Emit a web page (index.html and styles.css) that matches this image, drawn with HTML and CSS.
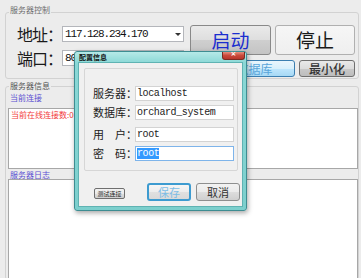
FILE: index.html
```html
<!DOCTYPE html>
<html lang="zh-CN">
<head>
    <meta charset="UTF-8">
    <title>服务器控制</title>
    <link rel="stylesheet" href="styles.css">
</head>
<body>
    <div class="window">
        <div class="group group-control">
            <div class="group-title">服务器控制</div>
            <div class="control-body">
                <div class="conn-fields">
                    <div class="field-row">
                        <span class="big-label">地址：</span>
                        <div class="combo">
                            <span class="combo-text">117.128.234.170</span>
                            <span class="combo-arrow"></span>
                        </div>
                    </div>
                    <div class="field-row">
                        <span class="big-label">端口：</span>
                        <div class="textbox port">80</div>
                    </div>
                </div>
                <div class="control-buttons">
                    <div class="btn-row btn-row-main">
                        <button class="btn btn-start">启动</button>
                        <button class="btn btn-stop">停止</button>
                    </div>
                    <div class="btn-row btn-row-small">
                        <button class="btn btn-db">配置数据库</button>
                        <button class="btn btn-min">最小化</button>
                    </div>
                </div>
            </div>
        </div>

        <div class="group group-info">
            <div class="group-title">服务器信息</div>
            <div class="sub-title conn-title">当前连接</div>
            <div class="list-box conn-box">
                <span class="online">当前在线连接数:0</span>
            </div>
            <div class="sub-title log-title">服务器日志</div>
            <div class="list-box log-box"></div>
        </div>
    </div>

    <!-- config dialog on top of the main window -->
    <div class="dialog">
        <div class="dialog-titlebar">配置信息</div>
        <span class="dialog-close"></span>
        <div class="dialog-client">
            <div class="config-panel">
                <div class="config-row">
                    <span class="config-label">服务器：</span>
                    <div class="config-input">localhost</div>
                </div>
                <div class="config-row">
                    <span class="config-label">数据库：</span>
                    <div class="config-input">orchard_system</div>
                </div>
                <div class="config-row row-user">
                    <span class="config-label">用&emsp;户：</span>
                    <div class="config-input">root</div>
                </div>
                <div class="config-row">
                    <span class="config-label">密&emsp;码：</span>
                    <div class="config-input focused"><span class="selected">root</span></div>
                </div>
            </div>
            <div class="dialog-buttons">
                <button class="btn btn-test">测试连接</button>
                <button class="btn btn-save">保存</button>
                <button class="btn btn-cancel">取消</button>
            </div>
        </div>
    </div>
</body>
</html>
```

FILE: styles.css
```css
* {
    margin: 0;
    padding: 0;
    box-sizing: border-box;
}

body {
    width: 361px;
    height: 278px;
    overflow: hidden;
    position: relative;
    background: #ececec;
    font-family: "Noto Sans CJK SC", sans-serif;
    color: #222;
}

/* ---------- main window ---------- */

.group {
    border: 1px solid #d2d2d2;
    border-radius: 3px;
}

.group-title {
    width: fit-content;
    height: 10px;
    margin-left: 3px;
    padding: 0 1px;
    background: #ececec;
    font-size: 8px;
    line-height: 10px;
    color: #6d6d6d;
}

.group-control {
    margin: 12px 2px 0 5px;
    padding: 0 3px 1px 11px;
}

.group-control .group-title {
    margin-top: -8px;
    margin-left: -8px;
}

.control-body {
    display: flex;
    margin-top: 10px;
}

.conn-fields {
    display: flex;
    flex-direction: column;
    gap: 6px;
    width: 167px;
    margin-right: 6px;
}

.field-row {
    display: flex;
    align-items: center;
    height: 18px;
}

.big-label {
    width: 45px;
    flex-shrink: 0;
    white-space: nowrap;
    font-size: 16px;
    letter-spacing: -1px;
    line-height: 18px;
    color: #1a1a1a;
}

.combo,
.textbox {
    display: flex;
    align-items: center;
    flex: 1;
    height: 16px;
    background: #fff;
    border: 1px solid #b4b6bb;
    font-family: "Liberation Mono", monospace;
    font-size: 11px;
    letter-spacing: -1.1px;
    color: #111;
    padding-left: 2px;
}

.combo-text {
    flex: 1;
}

.combo-arrow {
    width: 0;
    height: 0;
    margin-right: 2px;
    border-left: 3px solid transparent;
    border-right: 3px solid transparent;
    border-top: 3px solid #333;
}

.control-buttons {
    display: flex;
    flex-direction: column;
    gap: 5px;
}

.btn-row {
    display: flex;
    gap: 4px;
}

.btn {
    padding: 0;
    font-family: inherit;
    border: 1px solid #8e8f8f;
    border-radius: 3px;
    background: linear-gradient(#f2f2f2, #ebebeb 50%, #dddddd 51%, #cfcfcf);
    color: #222;
    cursor: pointer;
}

.btn-row-main .btn {
    height: 30px;
    font-size: 19px;
    line-height: 26px;
}

.btn-start {
    width: 81px;
    color: #1b2ecf;
    border-color: #898989;
    background: linear-gradient(#eaeaea, #dedede 50%, #cfcfcf 51%, #c4c4c4);
}

.btn-stop {
    width: 80px;
    border-color: #b0b0b0;
    background: linear-gradient(#f6f6f6, #efefef);
    color: #1a1a1a;
}

.btn-row-small .btn {
    height: 17px;
    font-size: 12px;
    line-height: 14px;
}

.btn-db {
    width: 105px;
    border-color: #3c7fb1;
    color: #5aa6da;
    background: linear-gradient(#eaf6fd, #d9f0fc 50%, #bee6fd 51%, #a7d9f5);
}

.btn-min {
    width: 56px;
    border-color: #6f6f6f;
    color: #333;
    font-weight: 500;
    background: linear-gradient(#e9e9e9, #dcdcdc 50%, #c9c9c9 51%, #bdbdbd);
}

.group-info {
    margin: 7px 2px 0 5px;
    padding: 0 0 0 2px;
}

.group-info .group-title {
    margin-top: -6px;
    margin-left: 1px;
    color: #555;
}

.sub-title {
    padding-left: 2px;
    font-size: 8px;
    line-height: 10px;
    color: #5b4fd2;
}

.conn-title {
    margin-top: 2px;
}

.list-box {
    background: #fff;
    border: 1px solid #a7a7a7;
}

.conn-box {
    height: 61px;
    margin-top: 5px;
    padding: 1px 2px;
}

.online {
    display: block;
    font-size: 8px;
    line-height: 9px;
    color: #f23a3a;
}

.log-title {
    margin-top: 1px;
    line-height: 9px;
}

.log-box {
    height: 100px;
}

/* ---------- config dialog ---------- */

.dialog {
    position: absolute;
    left: 74px;
    top: 51px;
    width: 173px;
    height: 160px;
    padding: 0 3px 3px;
    border: 1px solid #3e8d92;
    border-radius: 3px;
    background: linear-gradient(#b6e9e7, #8ad8d6 11px, #7ccfcd);
    box-shadow: 1px 2px 5px rgba(0, 0, 0, 0.35);
}

.dialog-titlebar {
    height: 10px;
    padding-left: 1px;
    font-size: 7px;
    font-weight: 700;
    line-height: 10px;
    color: #111;
}

.dialog-close {
    position: absolute;
    right: 1px;
    top: 0;
    width: 23px;
    height: 8px;
    border: 1px solid #7a2b22;
    border-top: none;
    border-radius: 0 0 3px 3px;
    background: linear-gradient(#e58f7f, #c9483a 50%, #b8352a);
}

.dialog-close::after {
    content: "×";
    position: absolute;
    left: 0;
    right: 0;
    top: -2px;
    text-align: center;
    font-family: "DejaVu Sans", sans-serif;
    font-size: 7px;
    font-weight: 700;
    color: #fff;
}

.dialog-client {
    height: 145px;
    padding: 5px 4px 0 5px;
    background: #f0f0f0;
    border: 1px solid #5fb3b3;
}

.config-panel {
    display: flex;
    flex-direction: column;
    gap: 4px;
    height: 103px;
    padding: 17px 3px 0 8px;
    border: 1px solid #d6d6d6;
    border-radius: 2px;
}

.config-row {
    display: flex;
    align-items: center;
    height: 15px;
}

.row-user {
    margin-top: 3px;
}

.config-label {
    width: 42px;
    font-size: 11px;
    line-height: 15px;
    color: #222;
    white-space: nowrap;
}

.config-input {
    flex: 1;
    height: 15px;
    padding-left: 1px;
    background: #fff;
    border: 1px solid #d3d3d3;
    font-family: "Liberation Mono", monospace;
    font-size: 10px;
    line-height: 13px;
    letter-spacing: -0.4px;
    color: #222;
}

.config-input.focused {
    border-color: #7eb4ea;
}

.selected {
    display: inline-block;
    background: #3399ff;
    color: #fff;
    line-height: 11px;
    margin-top: 1px;
}

.dialog-buttons {
    display: flex;
    align-items: flex-start;
    gap: 5px;
    margin: 12px -2px 0 0;
    padding-left: 10px;
}

.btn-test {
    width: 31px;
    height: 11px;
    margin-top: 5px;
    margin-right: auto;
    border-color: #6f6f6f;
    border-radius: 2px;
    font-size: 6px;
    line-height: 8px;
}

.btn-save,
.btn-cancel {
    width: 44px;
    height: 18px;
    font-size: 11px;
    line-height: 14px;
}

.btn-save {
    border: 2px solid #3d9bd0;
    color: #7dbde6;
    background: linear-gradient(#f6f6f6, #ececec 50%, #e0e0e0 51%, #d9d9d9);
}

.btn-cancel {
    color: #333;
}
```
